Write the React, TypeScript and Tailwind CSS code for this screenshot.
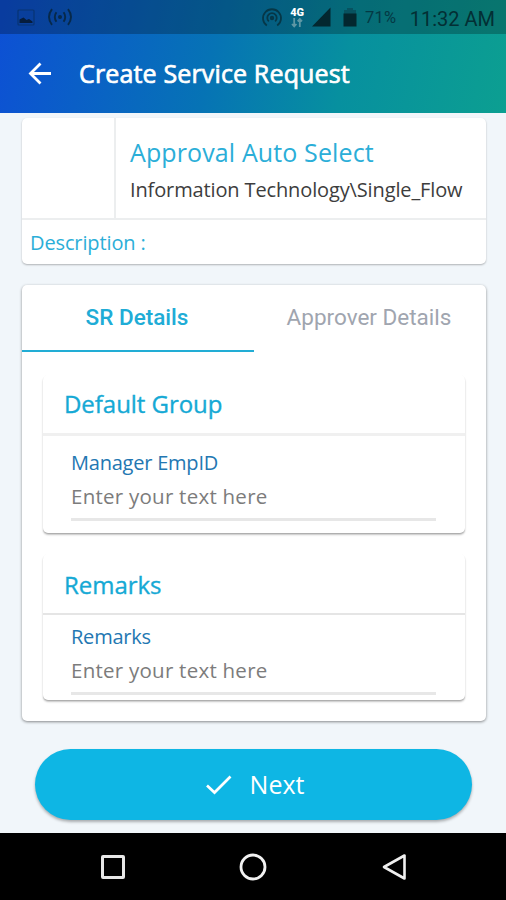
import type { ReactNode } from "react";

function StatusBar() {
  return (
    <div className="flex h-[34px] items-center bg-black/25 pl-[17px] pr-[11px] font-['Roboto',sans-serif]">
      <svg width="18" height="17" viewBox="0 0 18 17" className="shrink-0">
        <rect x="1" y="1" width="16" height="15" rx="1" fill="none" stroke="#083473" strokeWidth="1.2" />
        <path d="M2.5 14V10.5L6.5 8.5L9.5 11L12 10L15.5 12.5V14Z" fill="#061d3d" />
      </svg>
      <svg width="26" height="18" viewBox="0 0 26 18" className="ml-3 shrink-0" fill="none" stroke="#07294a" strokeWidth="1.9">
        <circle cx="13" cy="9" r="2" fill="#07294a" stroke="none" />
        <path d="M9.4 4.3Q6.2 9 9.4 13.7M16.6 4.3Q19.8 9 16.6 13.7M5 1.2Q-1 9 5 16.8M21 1.2Q27 9 21 16.8" />
      </svg>
      <svg width="22" height="20" viewBox="0 0 22 20" className="ml-[188px] shrink-0" fill="none" stroke="#063747" strokeWidth="1.8">
        <circle cx="11" cy="11" r="2.2" fill="#063747" stroke="none" />
        <path d="M7.8 14.3a4.7 4.7 0 1 1 6.4 0M5.8 18.6a9 9 0 1 1 10.4 0" />
      </svg>
      <div className="ml-[6px] flex w-4 shrink-0 flex-col items-center">
        <span className="text-[11px] font-black leading-[11px] tracking-[-0.3px] text-white">4G</span>
        <svg width="12" height="10" viewBox="0 0 12 10" fill="none" stroke="#5f98a5" strokeWidth="1.8">
          <path d="M3.2 0V8M1 6L3.2 8.5L5.4 6M8.8 9V1M6.6 3.3L8.8 1L11 3.3" />
        </svg>
      </div>
      <svg width="19" height="20" viewBox="0 0 19 20" className="ml-[7px] shrink-0">
        <path d="M0 19.5L18.5 0.5V19.5Z" fill="#03272f" />
      </svg>
      <svg width="14" height="19" viewBox="0 0 14 19" className="ml-[12px] shrink-0">
        <path d="M4 0H10V2H13V6H1V2H4Z" fill="#075260" />
        <path d="M0.5 5.5H13.5V18.5H0.5Z" fill="#03272f" />
      </svg>
      <span className="ml-[8px] w-[35px] whitespace-nowrap pt-[2px] text-[16.5px] leading-5 tracking-[0.2px] text-[#043944]">71%</span>
      <span className="ml-auto whitespace-nowrap pt-[3px] text-[20px] leading-5 text-[#032f34]">11:32 AM</span>
    </div>
  );
}

function AppBar() {
  return (
    <div className="flex h-[79px] items-center pl-[28px]">
      <svg width="24" height="24" viewBox="0 0 24 24" fill="none" stroke="white" strokeWidth="2.8" className="mb-px shrink-0">
        <path d="M23 12.5H2.5M12.5 2.5L2.5 12.5L12.5 22.5" />
      </svg>
      <h1 className="mb-[2px] ml-[27px] whitespace-nowrap text-[25px] leading-8 tracking-[0.15px] text-white [-webkit-text-stroke:0.7px_white]">
        Create Service Request
      </h1>
    </div>
  );
}

interface FieldCardProps {
  title: string;
  children: ReactNode;
  className: string;
}

function FieldCard({ title, children, className }: FieldCardProps) {
  return (
    <section className={`rounded-[5px] bg-white shadow-[0_2px_2px_rgba(0,0,0,0.22),0_1px_1px_rgba(0,0,0,0.15)] ${className}`}>
      <h2 className="whitespace-nowrap pl-[21px] text-[24px] leading-[33px] tracking-[-0.04px] text-[#15a9d5] [-webkit-text-stroke:0.35px_#15a9d5]">{title}</h2>
      {children}
    </section>
  );
}

function Field({ label }: { label: string }) {
  return (
    <div className="pl-[28px] pr-[29px]">
      <div className="whitespace-nowrap text-[20px] leading-[28px] tracking-[-0.22px] text-[#2377b2]">{label}</div>
      <div className="mt-[5px] border-b-[3px] border-[#e7e7e7] pb-[8px]">
        <div className="whitespace-nowrap text-[20.5px] leading-[28px] tracking-[0.25px] text-[#7c7c7c]">Enter your text here</div>
      </div>
    </div>
  );
}

export default function App() {
  return (
    <main className="flex h-[900px] w-[506px] flex-col overflow-hidden bg-[#f1f6fa] font-['Open_Sans',sans-serif]">
      <header className="shrink-0 bg-[linear-gradient(102deg,#0d50d5_0%,#0673b5_42%,#07909f_68%,#0c9f91_100%)]">
        <StatusBar />
        <AppBar />
      </header>

      <section className="ml-[22px] mr-5 mt-[5px] h-[146px] shrink-0 rounded-[5px] bg-white shadow-[0_1px_2px_rgba(0,0,0,0.28)]">
        <div className="flex h-[102px] border-b-2 border-[#eceeef]">
          <div className="w-[94px] shrink-0 border-r-2 border-[#eceeef]" />
          <div className="pl-[14px] pt-[17px]">
            <div className="whitespace-nowrap text-[25px] leading-[34px] tracking-[0.12px] text-[#2baed8]">Approval Auto Select</div>
            <div className="mt-[7px] whitespace-nowrap text-[20px] leading-[28px] tracking-[-0.13px] text-[#3d3d3d]">Information Technology\Single_Flow</div>
          </div>
        </div>
        <div className="whitespace-nowrap pl-2 pt-[9px] text-[20px] leading-[28px] tracking-[-0.12px] text-[#2baed8]">Description :</div>
      </section>

      <section className="ml-[22px] mr-5 mt-[21px] h-[436px] shrink-0 rounded-[5px] bg-white shadow-[0_1px_3px_rgba(0,0,0,0.45)]">
        <div className="grid h-[67px] grid-cols-2 font-['Roboto',sans-serif] text-[22.5px]">
          <div className="border-b-2 border-[#22add5] pr-[2px] pt-[18px] text-center font-medium leading-[28px] text-[#20acd6]">SR Details</div>
          <div className="pr-[2px] pt-[18px] text-center leading-[28px] text-[#a0a5af]">Approver Details</div>
        </div>
        <div className="flex flex-col gap-[21px] px-[21px] pt-[23px]">
          <FieldCard title="Default Group" className="h-[158px] pt-[12px]">
            <div className="mt-[13px] border-t-[3px] border-[#f0f0f0] pt-[13px]">
              <Field label="Manager EmpID" />
            </div>
          </FieldCard>
          <FieldCard title="Remarks" className="h-[146px] pt-[14px]">
            <div className="mt-[12px] border-t-2 border-[#e5e5e5] pt-[8px]">
              <Field label="Remarks" />
            </div>
          </FieldCard>
        </div>
      </section>

      <button className="ml-[35px] mr-[34px] mt-[28px] flex h-[71px] shrink-0 items-center justify-center rounded-full bg-[#0eb6e4] pb-[2px] text-white shadow-[0_2px_3px_rgba(0,0,0,0.3)]">
        <svg width="26" height="20" viewBox="0 0 26 20" fill="none" stroke="white" strokeWidth="2.7" className="ml-[3px] mt-[2px]">
          <path d="M1 10.5L8.5 17.5L24.5 1.5" />
        </svg>
        <span className="ml-[18px] text-[25px] leading-8">Next</span>
      </button>

      <nav className="mt-auto flex h-[67px] shrink-0 items-center bg-black pl-[100px]">
        <svg width="26" height="26" viewBox="0 0 26 26" fill="none" stroke="#e7e7e7" strokeWidth="3">
          <rect x="2.5" y="2.5" width="21" height="21" rx="0.5" />
        </svg>
        <svg width="28" height="28" viewBox="0 0 28 28" fill="none" stroke="#f2f2f2" strokeWidth="2.8" className="ml-[113px]">
          <circle cx="14" cy="14" r="12" />
        </svg>
        <svg width="26" height="28" viewBox="0 0 26 28" fill="none" stroke="#f0f0f0" strokeWidth="2.6" className="ml-[114px]" strokeLinejoin="round">
          <path d="M23.5 2.5V25.5L3 14Z" />
        </svg>
      </nav>
    </main>
  );
}
